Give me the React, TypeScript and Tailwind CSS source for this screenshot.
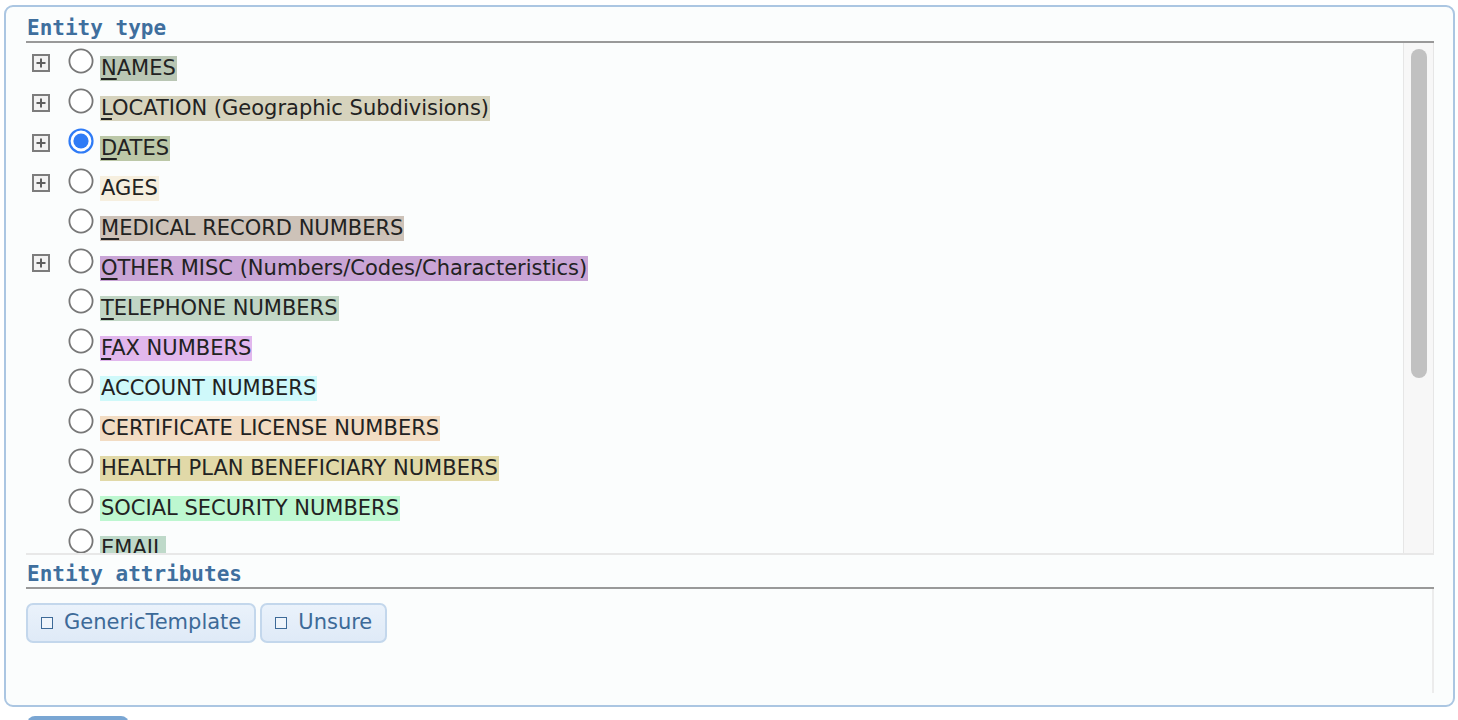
import type { ReactNode } from "react";

type Entity = {
  label: string;
  bg: string;
  expandable?: boolean;
  hotkey?: boolean;
  checked?: boolean;
};

const entities: Entity[] = [
  { label: "NAMES", bg: "bg-[#b9c6b4]", expandable: true, hotkey: true },
  { label: "LOCATION (Geographic Subdivisions)", bg: "bg-[#d6d3bd]", expandable: true, hotkey: true },
  { label: "DATES", bg: "bg-[#bcc8a8]", expandable: true, hotkey: true, checked: true },
  { label: "AGES", bg: "bg-[#f6efdf]", expandable: true },
  { label: "MEDICAL RECORD NUMBERS", bg: "bg-[#cdc2b8]", hotkey: true },
  { label: "OTHER MISC (Numbers/Codes/Characteristics)", bg: "bg-[#c9a5d6]", expandable: true, hotkey: true },
  { label: "TELEPHONE NUMBERS", bg: "bg-[#c1d6c5]", hotkey: true },
  { label: "FAX NUMBERS", bg: "bg-[#e1b7ed]", hotkey: true },
  { label: "ACCOUNT NUMBERS", bg: "bg-[#cff9fa]" },
  { label: "CERTIFICATE LICENSE NUMBERS", bg: "bg-[#f2dcc3]" },
  { label: "HEALTH PLAN BENEFICIARY NUMBERS", bg: "bg-[#e1d9a8]" },
  { label: "SOCIAL SECURITY NUMBERS", bg: "bg-[#bdf7d0]" },
  { label: "EMAIL", bg: "bg-[#bed9c9]" },
];

function PlusBox() {
  return (
    <svg width="18" height="18" viewBox="0 0 18 18" className="shrink-0">
      <rect x="1" y="1" width="16" height="16" fill="#f2f2f2" stroke="#7c7c7c" strokeWidth="2" />
      <path d="M4.5 9h9M9 4.5v9" stroke="#5e5e5e" strokeWidth="2" />
    </svg>
  );
}

function Radio({ checked }: { checked?: boolean }) {
  if (checked) {
    return (
      <svg width="26" height="26" viewBox="0 0 26 26" className="shrink-0">
        <circle cx="13" cy="13" r="11.5" fill="#fff" stroke="#2f7bf6" strokeWidth="2.2" />
        <circle cx="13" cy="13" r="7.6" fill="#2f7bf6" />
      </svg>
    );
  }
  return (
    <svg width="26" height="26" viewBox="0 0 26 26" className="shrink-0">
      <circle cx="13" cy="13" r="11.6" fill="#fff" stroke="#777" strokeWidth="1.8" />
    </svg>
  );
}

function SectionTitle({ children }: { children: ReactNode }) {
  return (
    <div className="border-b-2 border-[#999] pl-[1px] font-['DejaVu_Sans_Mono',monospace] text-[21px] font-bold leading-[26px] text-[#3f6f9e]">
      {children}
    </div>
  );
}

function EntityRow({ entity }: { entity: Entity }) {
  const first = entity.label.slice(0, 1);
  const rest = entity.label.slice(1);
  return (
    <div className="flex h-[40px] items-start">
      <div className="w-[42px] shrink-0 pl-[6px] pt-[8px]">{entity.expandable && <PlusBox />}</div>
      <div className="w-[32px] shrink-0 pt-[2px]">
        <Radio checked={entity.checked} />
      </div>
      <div className="pt-[7px]">
        <span className={`${entity.bg} inline-block h-[25px] whitespace-nowrap px-[1px] leading-[25px] text-[#222]`}>
          {entity.hotkey ? <span className="underline decoration-2 underline-offset-[3px]">{first}</span> : first}
          {rest}
        </span>
      </div>
    </div>
  );
}

function AttrButton({ label }: { label: string }) {
  return (
    <button className="flex h-[40px] items-center gap-[11px] rounded-[7px] border-2 border-[#c3d7ec] bg-gradient-to-b from-[#eaf2fb] to-[#dfeaf7] px-[13px] text-[#3d6a98]">
      <span className="inline-block h-[12px] w-[12px] border border-[#3d6a98] bg-white/40" />
      <span>{label}</span>
    </button>
  );
}

export default function App() {
  return (
    <main className="min-h-screen bg-white pl-[4px] pr-[3px] pt-[5px] font-['DejaVu_Sans',sans-serif] text-[21px]">
      <div className="flex h-[702px] flex-col rounded-[9px] border-2 border-[#abc6e2] bg-[#fbfdfd] pb-[12px] pl-[20px] pr-[19px] pt-[8px]">
        <SectionTitle>Entity type</SectionTitle>

        <div className="flex h-[512px] shrink-0 border-b-2 border-[#e8e8e8]">
          <div className="min-w-0 flex-1 overflow-hidden pt-[3px]">
            {entities.map((e) => (
              <EntityRow key={e.label} entity={e} />
            ))}
          </div>
          <div className="flex w-[31px] shrink-0 justify-center border-x border-[#e6e6e6] bg-[#f7f7f7] pt-[6px]">
            <div className="h-[329px] w-[16px] rounded-full bg-[#c1c1c1]" />
          </div>
        </div>

        <div className="mt-[6px]">
          <SectionTitle>Entity attributes</SectionTitle>
        </div>
        <div className="flex h-[106px] gap-[4px] border-r-2 border-[#ececec] pt-[14px]">
          <div className="flex h-[40px] gap-[4px]">
            <AttrButton label="GenericTemplate" />
            <AttrButton label="Unsure" />
          </div>
        </div>
      </div>
      <div className="ml-[23px] mt-[9px] h-[20px] w-[102px] rounded-t-[8px] bg-[#7aa6d3]" />
    </main>
  );
}
